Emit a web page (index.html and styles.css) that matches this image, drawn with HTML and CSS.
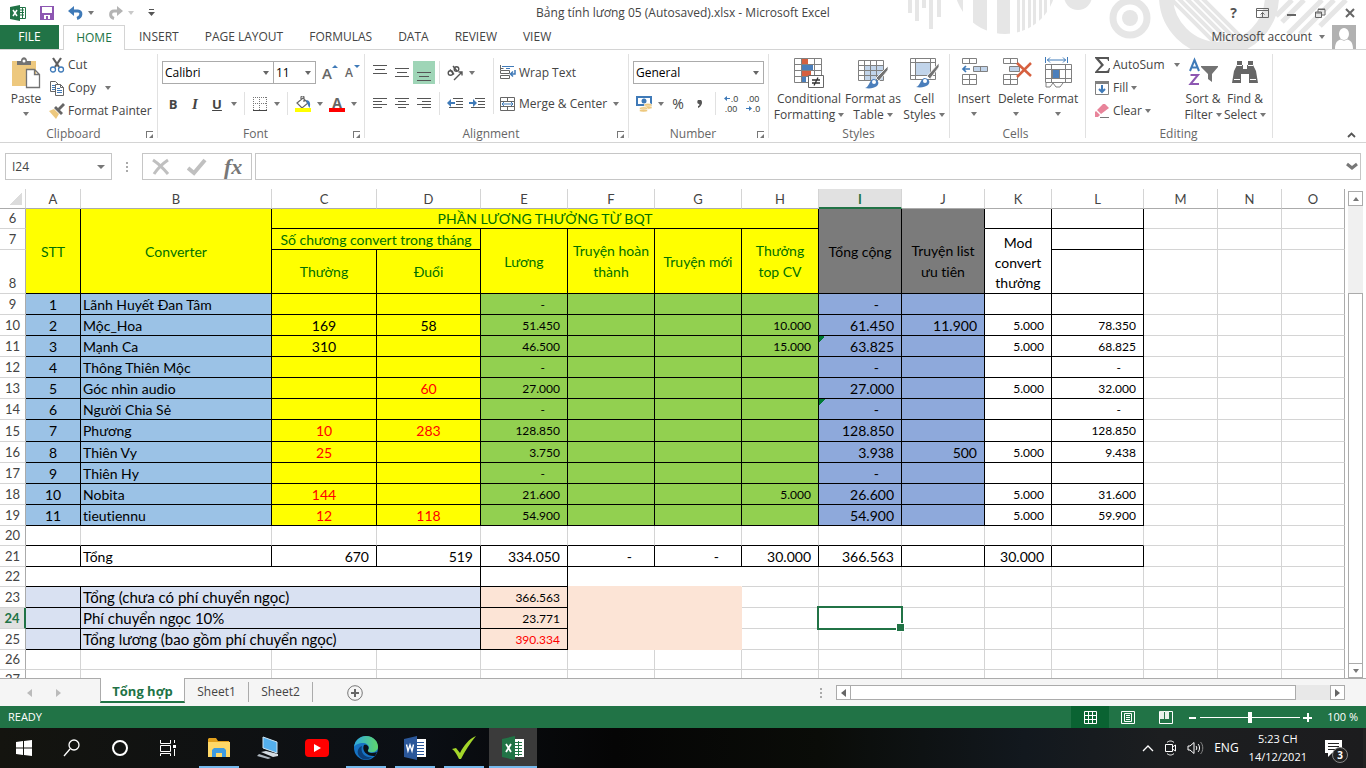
FILE: index.html
```html
<!DOCTYPE html>
<html lang="vi">
<head>
    <meta charset="utf-8">
    <title>Bảng tính lương 05 (Autosaved).xlsx - Microsoft Excel</title>
    <link rel="stylesheet" href="styles.css">
</head>
<body>
    <!-- Title bar -->
    <header class="title-bar">
        <svg class="title-art" width="466" height="49" viewBox="0 0 466 49" aria-hidden="true">
            <defs>
                <clipPath id="disc"><circle cx="105" cy="-17" r="51"/></clipPath>
                <clipPath id="ringInside"><circle cx="319" cy="-4" r="47"/></clipPath>
            </defs>
            <g fill="#e6e6e6">
                <path d="M8 0h4v13H8zM15 0h4v21h-4zM22 0h4v8h-4zM29 0h4v29h-4zM37 0h4v17h-4z"/>
                <g clip-path="url(#disc)">
                    <path d="M50 0h13v40H50zM73 0h14v40H73zM97 0h13v40H97zM117 0h3v40h-3zM122 0h3v40h-3zM128 0h3v40h-3zM133 0h3v40h-3zM139 0h3v40h-3zM144 0h3v40h-3zM150 0h3v40h-3z"/>
                </g>
                <circle cx="178" cy="-4" r="14"/>
                <circle cx="230" cy="18" r="8"/>
            </g>
            <g fill="none" stroke="#e6e6e6">
                <circle cx="230" cy="18" r="17" stroke-width="7"/>
                <circle cx="319" cy="-4" r="53" stroke-width="14"/>
                <g clip-path="url(#ringInside)" stroke-width="4">
                    <path d="M262-10l60 60M270-10l60 60M278-10l60 60M286-10l60 60M294-10l60 60"/>
                </g>
                <path stroke-width="5" d="M388 34l34-34M400 34l34-34M382 22l22-22M376 16l16-16M420 26l26-26"/>
            </g>
        </svg>
        <div class="quick-access">
            <svg width="16" height="16" viewBox="0 0 16 16"><path fill="#217346" d="M0 2l10-2v16L0 14z"/><path fill="#fff" stroke="#217346" d="M10 2.500h5.500v11H10"/><path stroke="#217346" d="M10 5h4M10 7.500h4M10 10h4M12.500 3v10"/><path stroke="#fff" stroke-width="1.500" d="M3 5l4 6M7 5l-4 6"/></svg>
            <button class="qa-btn" aria-label="Save"><svg width="14" height="14" viewBox="0 0 14 14"><path fill="#8d57b2" d="M0 0h14v14H0z"/><path fill="#fff" d="M2 1h10v6H2zM4 9h6v4H8v-3H6v3H4z"/></svg></button>
            <button class="qa-btn" aria-label="Undo"><svg width="16" height="14" viewBox="0 0 16 14"><path fill="none" stroke="#3f7ab8" stroke-width="3" d="M3 5h7c4 0 4 6-1 7.500"/><path fill="#3f7ab8" d="M0 5l6-5v10z"/></svg><i class="arrow"></i></button>
            <button class="qa-btn faded" aria-label="Redo"><svg width="16" height="14" viewBox="0 0 16 14"><path fill="none" stroke="#b4b4b4" stroke-width="3" d="M13 5H6c-4 0-5 6 0 7.500"/><path fill="#b4b4b4" d="M15 5L9 0v10z"/></svg><i class="arrow"></i></button>
            <button class="qa-btn" aria-label="Customize"><svg width="7" height="7" viewBox="0 0 7 7"><path fill="#555" d="M1 0h5v1H1zM0 3h7L3.500 7z"/></svg></button>
        </div>
        <h1>Bảng tính lương 05 (Autosaved).xlsx - Microsoft Excel</h1>
        <div class="window-buttons">
            <button aria-label="Help">?</button>
            <button aria-label="Ribbon display"><svg width="13" height="10" viewBox="0 0 13 10"><path fill="none" stroke="#666" d="M.5.5h12v9H.5zM.5 2.500h12M6.500 9V4.500M4.500 6.500l2-2 2 2"/></svg></button>
            <button aria-label="Minimize"><svg width="10" height="10" viewBox="0 0 10 10"><path fill="#666" d="M0 6h9v2H0z"/></svg></button>
            <button aria-label="Restore"><svg width="11" height="10" viewBox="0 0 11 10"><path fill="none" stroke="#666" d="M.5 4h6v5.500h-6zM.5 5h6M3 4V1.500h7V7H7M3 1h7"/></svg></button>
            <button aria-label="Close"><svg width="10" height="10" viewBox="0 0 10 10"><path stroke="#666" stroke-width="2" d="M1 1l8 8M9 1L1 9"/></svg></button>
        </div>
    </header>

    <nav class="tabs">
        <button class="tab tab-file">FILE</button>
        <button class="tab active">HOME</button>
        <button class="tab">INSERT</button>
        <button class="tab">PAGE LAYOUT</button>
        <button class="tab">FORMULAS</button>
        <button class="tab">DATA</button>
        <button class="tab">REVIEW</button>
        <button class="tab">VIEW</button>
        <button class="account">Microsoft account <i class="arrow"></i>
            <svg width="24" height="24" viewBox="0 0 24 24"><path fill="#b1b1b1" d="M0 0h24v24H0z"/><ellipse cx="12" cy="9" rx="5" ry="6" fill="#fff"/><path fill="#fff" d="M3 24c0-7 3-9 6-9.500 2 1.500 4 1.500 6 0 3 .5 6 2.500 6 9.500z"/></svg>
        </button>
    </nav>

    <!-- Ribbon -->
    <section class="ribbon">
        <div class="group g-clipboard">
            <div class="group-body">
                <button class="big">
                    <svg width="30" height="32" viewBox="0 0 30 32"><path fill="#edc87e" d="M1 4h24v25H1z"/><path fill="#737373" d="M6 8V4h4c0-5 6-5 6 0h4v4z"/><circle cx="13" cy="4" r="1.500" fill="#fff"/><path fill="#fff" stroke="#737373" stroke-width="1.300" d="M15.500 12.500h8l5 5v13h-13zM23.500 12.500v5h5"/></svg>
                    <span>Paste</span><i class="arrow"></i>
                </button>
                <div class="stack">
                    <button><svg width="16" height="16" viewBox="0 0 16 16"><path stroke="#5f5f5f" stroke-width="2.200" d="M4 1l6 9M12 1L6 10"/><circle cx="4" cy="12.500" r="2.500" fill="none" stroke="#3f7ab8" stroke-width="1.300"/><circle cx="12" cy="12.500" r="2.500" fill="none" stroke="#3f7ab8" stroke-width="1.300"/></svg>Cut</button>
                    <button><svg width="16" height="16" viewBox="0 0 16 16"><path fill="#fff" stroke="#666" d="M1.500 1.500h5l3 3v7h-8z"/><path stroke="#3f7ab8" d="M3 5.500h3M3 7.500h3M3 9.500h3"/><path fill="#fff" stroke="#666" d="M6.500 4.500h5l3 3v8h-8zM11.500 4.500v3h3"/><path stroke="#3f7ab8" d="M8 8.500h3M8 10.500h5M8 12.500h5"/></svg>Copy<i class="arrow far"></i></button>
                    <button><svg width="16" height="16" viewBox="0 0 16 16"><path fill="#edc87e" d="M0 8l5-2 5 5-3 5z"/><path fill="#666" d="M5 5l2-2 7 7-2 2zM9 5l5-5 2 2-5 5z"/></svg>Format Painter</button>
                </div>
            </div>
            <div class="group-label">Clipboard<i class="launch"></i></div>
        </div>

        <div class="group g-font">
            <div class="group-body rows">
                <div class="row">
                    <span class="combo font-name"><select aria-label="Font"><option>Calibri</option></select></span>
                    <span class="combo font-size"><select aria-label="Font size"><option>11</option></select></span>
                    <button class="ico" aria-label="Grow font"><b class="glyph">A</b><i class="tip up"></i></button>
                    <button class="ico" aria-label="Shrink font"><b class="glyph small">A</b><i class="tip"></i></button>
                </div>
                <div class="row">
                    <button class="ico"><b>B</b></button>
                    <button class="ico serif"><em>I</em></button>
                    <button class="ico"><b><u>U</u></b></button>
                    <i class="arrow wide"></i><i class="sep"></i>
                    <button class="ico" aria-label="Borders"><svg width="14" height="14" viewBox="0 0 14 14"><path fill="none" stroke="#777" stroke-dasharray="1 1" d="M.5 0v13M6.500 0v13M13.500 0v13M0 .5h14M0 6.500h14"/><path stroke="#444" d="M0 13.500h14"/></svg></button>
                    <i class="arrow wide"></i><i class="sep"></i>
                    <button class="ico" aria-label="Fill color"><svg width="16" height="16" viewBox="0 0 16 16"><path fill="#fff" stroke="#666" stroke-width="1.200" d="M2 7l6-5 5 5-6 5zM6 4V1.500a1.500 1.500 0 0 1 3 0V6"/><path fill="#3f7ab8" d="M11 4c4 0 5 4 3.500 8C13 10 13 8 12 7z"/><path fill="#ff0" d="M0 12h16v4H0z"/></svg></button>
                    <i class="arrow wide"></i>
                    <button class="ico" aria-label="Font color"><span class="font-color">A</span></button>
                    <i class="arrow wide"></i>
                </div>
            </div>
            <div class="group-label">Font<i class="launch"></i></div>
        </div>

        <div class="group g-align">
            <div class="group-body">
                <div class="rows">
                    <div class="row">
                        <button class="ico" aria-label="Top align"><svg width="14" height="16" viewBox="0 0 14 16"><path stroke="#555" d="M0 .5h14M2 4.500h10M0 8.500h14"/></svg></button>
                        <button class="ico" aria-label="Middle align"><svg width="14" height="16" viewBox="0 0 14 16"><path stroke="#555" d="M0 3.500h14M2 7.500h10M0 11.500h14"/></svg></button>
                        <button class="ico on" aria-label="Bottom align"><svg width="14" height="16" viewBox="0 0 14 16"><path stroke="#555" d="M0 7.500h14M2 11.500h10M0 15.500h14"/></svg></button>
                        <i class="sep"></i>
                        <button class="ico" aria-label="Orientation"><svg width="18" height="16" viewBox="0 0 18 16"><g fill="none" stroke="#555" stroke-width="1.400"><circle cx="4.500" cy="8" r="2.300"/><path d="M4 4.500l4 5M7 1l4 5"/><circle cx="10.500" cy="4" r="2.300"/><path d="M8 15l8-8M12.500 7H16v3.500"/></g></svg></button>
                        <i class="arrow wide"></i>
                    </div>
                    <div class="row">
                        <button class="ico" aria-label="Align left"><svg width="14" height="14" viewBox="0 0 14 14"><path stroke="#555" d="M0 1.500h14M0 4.500h9M0 7.500h14M0 10.500h9"/></svg></button>
                        <button class="ico" aria-label="Center"><svg width="14" height="14" viewBox="0 0 14 14"><path stroke="#555" d="M0 1.500h14M3 4.500h8M0 7.500h14M3 10.500h8"/></svg></button>
                        <button class="ico" aria-label="Align right"><svg width="14" height="14" viewBox="0 0 14 14"><path stroke="#555" d="M0 1.500h14M5 4.500h9M0 7.500h14M5 10.500h9"/></svg></button>
                        <i class="sep"></i>
                        <button class="ico" aria-label="Decrease indent"><svg width="16" height="14" viewBox="0 0 16 14"><path stroke="#555" d="M6 1.500h10M9 4.500h7M9 7.500h7M2 10.500h14"/><path fill="#3f7ab8" d="M0 6l4-4v3h4v2H4v3z"/></svg></button>
                        <button class="ico" aria-label="Increase indent"><svg width="16" height="14" viewBox="0 0 16 14"><path stroke="#555" d="M6 1.500h10M9 4.500h7M9 7.500h7M2 10.500h14"/><path fill="#3f7ab8" d="M8 6L4 2v3H0v2h4v3z"/></svg></button>
                    </div>
                </div>
                <i class="sep tall"></i>
                <div class="rows">
                    <button class="row"><svg width="16" height="16" viewBox="0 0 16 16"><path fill="#fff" stroke="#666" d="M.5 5.500h9v3h-9zM.5 10.500h9v3h-9zM.5 0v5M.5 3.500h3"/><path fill="none" stroke="#3f7ab8" d="M2 1.500h12M6 3.500h4"/><path fill="none" stroke="#3f7ab8" stroke-width="1.500" d="M15 5v4h-4M13 6.500L10.500 9l2.500 2.500"/></svg>Wrap Text</button>
                    <button class="row"><svg width="16" height="16" viewBox="0 0 16 16"><path fill="#fff" stroke="#666" d="M.5 1.500h14v13H.5zM.5 5.500h14M.5 10.500h14M7.500 1.500v4M7.500 10.500v4"/><path fill="none" stroke="#3f7ab8" d="M2 8h11M4 6L2 8l2 2M11 6l2 2-2 2"/></svg>Merge &amp; Center<i class="arrow far"></i></button>
                </div>
            </div>
            <div class="group-label">Alignment<i class="launch"></i></div>
        </div>

        <div class="group g-number">
            <div class="group-body rows">
                <div class="row"><span class="combo format"><select aria-label="Number format"><option>General</option></select></span></div>
                <div class="row">
                    <button class="ico" aria-label="Accounting format"><svg width="16" height="16" viewBox="0 0 16 16"><path fill="#fff" stroke="#3f7ab8" stroke-width="2" d="M1 1h14v8H1z"/><circle cx="8" cy="5" r="2.500" fill="#3f7ab8"/><g fill="#edc87e" stroke="#fff" stroke-width=".5"><ellipse cx="12" cy="9" rx="4" ry="1.700"/><ellipse cx="12" cy="11.500" rx="4" ry="1.700"/><ellipse cx="7.500" cy="12.500" rx="4" ry="1.700"/><ellipse cx="7.500" cy="14.500" rx="4" ry="1.500"/></g></svg></button>
                    <i class="arrow wide"></i>
                    <button class="ico pct">%</button>
                    <button class="ico" aria-label="Comma style"><svg width="6" height="8" viewBox="0 0 6 8"><path fill="#555" d="M1 0h3c2 2 1 6-3 8V6c1 0 2-1 1-2C0 4 0 1 1 0z"/></svg></button>
                    <i class="sep"></i>
                    <button class="ico dec" aria-label="Increase decimal"><span><svg width="6" height="5" viewBox="0 0 6 5"><path fill="#3f7ab8" d="M0 2.500L3 0v2h3v1H3v2z"/></svg>.0</span><span>.00</span></button>
                    <button class="ico dec" aria-label="Decrease decimal"><span>.00</span><span><svg width="6" height="5" viewBox="0 0 6 5"><path fill="#3f7ab8" d="M6 2.500L3 0v2H0v1h3v2z"/></svg>.0</span></button>
                </div>
            </div>
            <div class="group-label">Number<i class="launch"></i></div>
        </div>

        <div class="group g-styles">
            <div class="group-body">
                <button class="big w-lg"><svg width="32" height="32" viewBox="0 0 32 32"><path fill="#fff" stroke="#808080" d="M1.500 1.500h27v24h-27zM1.500 7.500h27M1.500 13.500h27M1.500 19.500h27M8.500 1.500v24M21.500 1.500v24"/><path fill="#d6603f" d="M9 2h6v5H9zM9 14h9v5H9z"/><path fill="#4a7ebb" d="M9 8h11v5H9zM9 20h4v5H9z"/><path fill="#fff" stroke="#666" d="M15.500 18.500h15v12h-15z"/><path stroke="#333" stroke-width="1.300" d="M19 23h8M19 26h8M25 20.500l-4 8"/></svg>
                    <span>Conditional<br>Formatting<i class="arrow"></i></span></button>
                <button class="big w-md"><svg width="32" height="32" viewBox="0 0 32 32"><path fill="#fff" d="M1 3h25v20H1z"/><path fill="#c1d4ea" d="M7 9h19v14H7z"/><path fill="none" stroke="#808080" d="M1.500 3.500h25v20h-25zM1.500 8.500h25M1.500 13.500h25M1.500 18.500h25M7.500 3.500v20M13.500 3.500v20M19.500 3.500v20"/><path fill="#737373" stroke="#fff" stroke-width=".8" d="M31 9v4l-9 11-3-3z"/><path fill="#4a7ebb" d="M8 31c4-1 4-7 8-9 5 0 7 4 4 7-3 2-7 3-12 2z"/><circle cx="17" cy="25" r="2" fill="#fff"/></svg>
                    <span>Format as<br>Table<i class="arrow"></i></span></button>
                <button class="big w-sm"><svg width="32" height="32" viewBox="0 0 32 32"><path fill="#fff" stroke="#808080" d="M2.500 1.500h25v21h-25zM2.500 5.500h25M2.500 18.500h25M7.500 1.500v21M22.500 1.500v21"/><path fill="#c1d4ea" d="M8 6h14v12H8z"/><path fill="#737373" stroke="#fff" stroke-width=".8" d="M31 6v4l-9 12-3-3z"/><path fill="#4a7ebb" d="M8 30c4-1 4-7 8-9 5 0 7 4 4 7-3 2-7 3-12 2z"/><circle cx="17" cy="24" r="2" fill="#fff"/></svg>
                    <span>Cell<br>Styles<i class="arrow"></i></span></button>
            </div>
            <div class="group-label">Styles</div>
        </div>

        <div class="group g-cells">
            <div class="group-body">
                <button class="big w-sm"><svg width="32" height="32" viewBox="0 0 32 32"><path fill="#fff" stroke="#808080" d="M4.500 1.500h14v5h-14zM11.500 1.500v5M4.500 17.500h14v10h-14zM4.500 22.500h14M11.500 17.500v10"/><path fill="#c1d4ea" stroke="#808080" d="M15.500 9.500h14v5h-14zM22.500 9.500v5"/><path fill="none" stroke="#3f7ab8" stroke-width="1.700" d="M5 12h7M8 9l-3 3 3 3"/></svg>
                    <span>Insert</span><i class="arrow"></i></button>
                <button class="big w-sm"><svg width="32" height="32" viewBox="0 0 32 32"><path fill="#fff" stroke="#808080" d="M3.500 1.500h14v5h-14zM10.500 1.500v5M3.500 17.500h14v10h-14zM3.500 22.500h14M10.500 17.500v10"/><path fill="#c1d4ea" stroke="#808080" d="M9.500 9.500h10v5h-10z"/><path stroke="#d6603f" stroke-width="2.500" d="M17 6l14 13M31 6L17 20"/></svg>
                    <span>Delete</span><i class="arrow"></i></button>
                <button class="big w-sm"><svg width="32" height="32" viewBox="0 0 32 32"><path fill="none" stroke="#3f7ab8" d="M3.500 0v6M25.500 0v6M5 3h19M8 .5L5.500 3 8 5.500M21 .5L23.500 3 21 5.500"/><path fill="#fff" stroke="#808080" d="M3.500 7.500h26v18h-26zM3.500 12.500h26M3.500 21.500h26M9.500 7.500v18M23.500 7.500v18M4 26v4h4l3-4 3 4h4l3-4"/><path fill="#4a7ebb" stroke="#808080" d="M10.500 12.500h7v9h-7z"/></svg>
                    <span>Format</span><i class="arrow"></i></button>
            </div>
            <div class="group-label">Cells</div>
        </div>

        <div class="group g-editing">
            <div class="group-body">
                <div class="stack">
                    <button><svg width="16" height="16" viewBox="0 0 16 16"><path fill="#555" d="M1 0h14v4h-1c0-2-1-2-3-2H5l5 6-6 6h8c2 0 2-1 3-3h1l-1 5H1v-1l6-7-6-7z"/></svg>AutoSum<i class="arrow far"></i></button>
                    <button><svg width="16" height="16" viewBox="0 0 16 16"><path fill="#fff" stroke="#808080" d="M1.500 1.500h13v13h-13z"/><path fill="#808080" d="M1 1h14v3H1z"/><path fill="none" stroke="#3f7ab8" stroke-width="2" d="M8 5v7M5 9l3 3 3-3"/></svg>Fill<i class="arrow"></i></button>
                    <button><svg width="16" height="16" viewBox="0 0 16 16"><path fill="#e8849a" d="M9 1h2l4 4-8 6-4-4zM2 8l4 4-2 2H1V9z"/><path stroke="#777" d="M6 14.500h9"/></svg>Clear<i class="arrow"></i></button>
                </div>
                <button class="big w-sm"><svg width="32" height="32" viewBox="0 0 32 32"><g fill="none" stroke-width="2"><path stroke="#3f7ab8" d="M3 14L7.500 3 12 14M4.500 10.500h6"/><path stroke="#8d57b2" d="M3.500 18H11L3.500 27H12"/></g><path fill="#737373" d="M14 9h17v1l-6 7v8l-4-3v-5l-7-7z"/></svg>
                    <span>Sort &amp;<br>Filter<i class="arrow"></i></span></button>
                <button class="big w-sm"><svg width="32" height="32" viewBox="0 0 32 32"><path fill="#666" d="M8 4h5v4h1v4h4V8h1V4h5v4l3 6 2 12h-9v-9h-8v9H3l2-12 3-6z"/><path stroke="#fff" d="M5 22.500h6M21 22.500h6M8 8.500h5M19 8.500h5"/></svg>
                    <span>Find &amp;<br>Select<i class="arrow"></i></span></button>
            </div>
            <div class="group-label">Editing</div>
        </div>
        <button class="collapse" aria-label="Collapse ribbon"><svg width="9" height="6" viewBox="0 0 9 6"><path fill="none" stroke="#555" stroke-width="1.800" d="M1 5l3.500-3.500L8 5"/></svg></button>
    </section>

    <!-- Formula bar -->
    <section class="formula-bar">
        <span class="name-box"><input type="text" value="I24" aria-label="Name box"><i class="arrow"></i></span>
        <i class="dots"></i>
        <div class="fx-buttons">
            <button aria-label="Cancel"><svg width="18" height="18" viewBox="0 0 18 18"><path fill="none" stroke="#c0c0c0" stroke-width="3" d="M1 2c6 4 10 8 15 14M16 2C10 6 6 10 2 16"/></svg></button>
            <button aria-label="Enter"><svg width="20" height="18" viewBox="0 0 20 18"><path fill="none" stroke="#c0c0c0" stroke-width="4" d="M1 10l6 5L18 2"/></svg></button>
            <button class="fx">fx</button>
        </div>
        <div class="formula"><input type="text" aria-label="Formula"><svg width="12" height="9" viewBox="0 0 12 9"><path fill="none" stroke="#777" stroke-width="3" d="M1 2l5 4 5-4"/></svg></div>
    </section>

    <!-- Worksheet -->
    <main class="sheet">
        <div class="grid-wrap">
            <table class="grid">
                <colgroup>
                    <col class="c-head"><col class="c-a"><col class="c-b"><col class="c-c"><col class="c-d"><col class="c-e"><col class="c-e"><col class="c-e"><col class="c-h"><col class="c-i"><col class="c-i"><col class="c-k"><col class="c-l"><col class="c-m"><col class="c-n"><col class="c-o">
                </colgroup>
                <thead>
                    <tr><th class="corner"></th><th>A</th><th>B</th><th>C</th><th>D</th><th>E</th><th>F</th><th>G</th><th>H</th><th class="sel">I</th><th>J</th><th>K</th><th>L</th><th>M</th><th>N</th><th>O</th></tr>
                </thead>
                <tbody>
                    <tr class="h20"><th>6</th><td class="k yellow" rowspan="3">STT</td><td class="k yellow" rowspan="3">Converter</td><td class="k yellow" colspan="6">PHẦN LƯƠNG THƯỞNG TỪ BQT</td><td class="k gray" rowspan="3">Tổng cộng</td><td class="k gray open"></td><td class="k"></td><td class="k"></td><td></td><td></td><td></td></tr>
                    <tr><th>7</th><td class="k yellow tight" colspan="2">Số chương convert trong tháng</td><td class="k yellow" rowspan="2">Lương</td><td class="k yellow" rowspan="2">Truyện hoàn thành</td><td class="k yellow" rowspan="2">Truyện mới</td><td class="k yellow" rowspan="2">Thưởng<br>top CV</td><td class="k gray" rowspan="2">Truyện list ưu tiên</td><td class="k mod" rowspan="2">Mod convert thưởng</td><td class="k"></td><td></td><td></td><td></td></tr>
                    <tr class="h44"><th>8</th><td class="k yellow">Thường</td><td class="k yellow">Đuổi</td><td class="k"></td><td></td><td></td><td></td></tr>
                    <tr class="data"><th>9</th><td>1</td><td>Lãnh Huyết Đan Tâm</td><td></td><td></td><td class="nil">-</td><td></td><td></td><td></td><td class="nil">-</td><td></td><td></td><td></td><td></td><td></td><td></td></tr>
                    <tr class="data"><th>10</th><td>2</td><td>Mộc_Hoa</td><td>169</td><td>58</td><td>51.450</td><td></td><td></td><td>10.000</td><td>61.450</td><td>11.900</td><td>5.000</td><td>78.350</td><td></td><td></td><td></td></tr>
                    <tr class="data"><th>11</th><td>3</td><td>Mạnh Ca</td><td>310</td><td></td><td>46.500</td><td></td><td></td><td>15.000</td><td class="flag">63.825</td><td></td><td>5.000</td><td>68.825</td><td></td><td></td><td></td></tr>
                    <tr class="data"><th>12</th><td>4</td><td>Thông Thiên Mộc</td><td></td><td></td><td class="nil">-</td><td></td><td></td><td></td><td class="nil">-</td><td></td><td></td><td class="nil">-</td><td></td><td></td><td></td></tr>
                    <tr class="data"><th>13</th><td>5</td><td>Góc nhìn audio</td><td></td><td class="red">60</td><td>27.000</td><td></td><td></td><td></td><td>27.000</td><td></td><td>5.000</td><td>32.000</td><td></td><td></td><td></td></tr>
                    <tr class="data"><th>14</th><td>6</td><td>Người Chia Sẻ</td><td></td><td></td><td class="nil">-</td><td></td><td></td><td></td><td class="nil flag">-</td><td></td><td></td><td class="nil">-</td><td></td><td></td><td></td></tr>
                    <tr class="data h22"><th>15</th><td>7</td><td>Phương</td><td class="red">10</td><td class="red">283</td><td>128.850</td><td></td><td></td><td></td><td>128.850</td><td></td><td></td><td>128.850</td><td></td><td></td><td></td></tr>
                    <tr class="data"><th>16</th><td>8</td><td>Thiên Vy</td><td class="red">25</td><td></td><td>3.750</td><td></td><td></td><td></td><td>3.938</td><td>500</td><td>5.000</td><td>9.438</td><td></td><td></td><td></td></tr>
                    <tr class="data"><th>17</th><td>9</td><td>Thiên Hy</td><td></td><td></td><td class="nil">-</td><td></td><td></td><td></td><td class="nil">-</td><td></td><td></td><td></td><td></td><td></td><td></td></tr>
                    <tr class="data"><th>18</th><td>10</td><td>Nobita</td><td class="red">144</td><td></td><td>21.600</td><td></td><td></td><td>5.000</td><td>26.600</td><td></td><td>5.000</td><td>31.600</td><td></td><td></td><td></td></tr>
                    <tr class="data"><th>19</th><td>11</td><td>tieutiennu</td><td class="red">12</td><td class="red">118</td><td>54.900</td><td></td><td></td><td></td><td>54.900</td><td></td><td>5.000</td><td>59.900</td><td></td><td></td><td></td></tr>
                    <tr class="h20 spacer"><th>20</th><td></td><td></td><td></td><td></td><td></td><td></td><td></td><td></td><td></td><td></td><td></td><td></td><td></td><td></td><td></td></tr>
                    <tr class="total"><th>21</th><td></td><td class="left">Tổng</td><td>670</td><td>519</td><td>334.050</td><td class="nil">-</td><td class="nil">-</td><td>30.000</td><td>366.563</td><td></td><td>30.000</td><td></td><td></td><td></td><td></td></tr>
                    <tr class="h20"><th>22</th><td class="k" colspan="4"></td><td class="k"></td><td class="under-peach" colspan="2"></td><td></td><td></td><td></td><td></td><td></td><td></td><td></td><td></td></tr>
                    <tr class="sum"><th>23</th><td class="k pale"></td><td class="k pale left" colspan="3">Tổng (chưa có phí chuyển ngọc)</td><td class="k peach num">366.563</td><td class="peach-block" colspan="2" rowspan="3"></td><td></td><td></td><td></td><td></td><td></td><td></td><td></td><td></td></tr>
                    <tr class="sum"><th class="sel">24</th><td class="k pale"></td><td class="k pale left" colspan="3">Phí chuyển ngọc 10%</td><td class="k peach num">23.771</td><td></td><td class="cursor"></td><td></td><td></td><td></td><td></td><td></td><td></td></tr>
                    <tr class="sum"><th>25</th><td class="k pale"></td><td class="k pale left" colspan="3">Tổng lương (bao gồm phí chuyển ngọc)</td><td class="k peach num red">390.334</td><td></td><td></td><td></td><td></td><td></td><td></td><td></td><td></td></tr>
                    <tr class="h20"><th>26</th><td></td><td></td><td></td><td></td><td></td><td></td><td></td><td></td><td></td><td></td><td></td><td></td><td></td><td></td><td></td></tr>
                    <tr class="h20"><th>27</th><td></td><td></td><td></td><td></td><td></td><td></td><td></td><td></td><td></td><td></td><td></td><td></td><td></td><td></td><td></td></tr>
                </tbody>
            </table>
        </div>
        <div class="vscroll">
            <button aria-label="Scroll up"><i class="arrow up"></i></button>
            <div class="vtrack"><div class="vthumb"></div></div>
            <button aria-label="Scroll down"><i class="arrow"></i></button>
        </div>
    </main>

    <!-- Sheet tabs -->
    <div class="sheet-tabs">
        <div class="tab-nav"><button aria-label="Previous sheet"><i class="arrow lt"></i></button><button aria-label="Next sheet"><i class="arrow rt"></i></button></div>
        <button class="sheet-tab active">Tổng hợp</button>
        <button class="sheet-tab">Sheet1</button>
        <button class="sheet-tab">Sheet2</button>
        <button class="add-sheet" aria-label="New sheet"><svg width="16" height="16" viewBox="0 0 16 16"><circle cx="8" cy="8" r="7.300" fill="none" stroke="#777"/><path stroke="#666" stroke-width="2" d="M8 4v8M4 8h8"/></svg></button>
        <div class="hscroll">
            <i class="dots"></i>
            <button aria-label="Scroll left"><i class="arrow lt"></i></button>
            <div class="htrack"><div class="hthumb"></div></div>
            <button aria-label="Scroll right"><i class="arrow rt"></i></button>
        </div>
    </div>

    <footer class="status-bar">
        <span class="ready">READY</span>
        <button class="view on" aria-label="Normal"><svg width="13" height="13" viewBox="0 0 13 13"><path fill="none" stroke="#fff" d="M.5.5h12v12H.5zM4.500 0v13M8.500 0v13M0 4.500h13M0 8.500h13"/></svg></button>
        <button class="view" aria-label="Page layout"><svg width="14" height="13" viewBox="0 0 14 13"><path fill="none" stroke="#fff" d="M.5.5h13v12H.5zM3.500 2.500h7v8h-7zM5 4.500h4M5 6.500h4M5 8.500h4"/></svg></button>
        <button class="view" aria-label="Page break preview"><svg width="14" height="13" viewBox="0 0 14 13"><path fill="none" stroke="#fff" d="M.5.5h13v12H.5z"/><path fill="#e6f0ea" d="M1 0h4v8H1zM6 0h4v8H6z"/></svg></button>
        <div class="zoom">
            <button aria-label="Zoom out"><svg width="9" height="9" viewBox="0 0 9 9"><path fill="#fff" d="M1 4h7v2H1z"/></svg></button>
            <input type="range" min="0" max="200" value="100" aria-label="Zoom">
            <button aria-label="Zoom in"><svg width="9" height="9" viewBox="0 0 9 9"><path fill="#fff" d="M0 4h4V0h2v4h3v2H6v3H4V6H0z"/></svg></button>
        </div>
        <span class="zoom-value">100 %</span>
    </footer>

    <!-- Windows taskbar -->
    <div class="taskbar">
        <button class="task" aria-label="Start"><svg width="16" height="16" viewBox="0 0 16 16"><path fill="#fff" d="M0 2l7-1v6.500H0zM8 1l8-1v7.500H8zM0 8.500h7V15l-7-1zM8 8.500h8V16l-8-1z"/></svg></button>
        <button class="task" aria-label="Search"><svg width="18" height="18" viewBox="0 0 18 18"><circle cx="11" cy="6" r="5" fill="none" stroke="#fff" stroke-width="1.300"/><path stroke="#fff" stroke-width="1.300" d="M7 10l-6 7"/></svg></button>
        <button class="task" aria-label="Cortana"><svg width="18" height="18" viewBox="0 0 18 18"><circle cx="9" cy="9" r="7" fill="none" stroke="#fff" stroke-width="2"/></svg></button>
        <button class="task" aria-label="Task view"><svg width="17" height="16" viewBox="0 0 17 16"><path fill="none" stroke="#fff" d="M.5 0v3.500h10V0M.5 5.500h10v6H.5zM.5 16v-2.500h10V16M14.500 0v3M14.500 9v7"/><path fill="#fff" d="M13 5h3v3h-3z"/></svg></button>
        <div class="task-apps">
            <button class="task run" aria-label="File Explorer"><svg width="24" height="22" viewBox="0 0 24 22"><path fill="#e2a01d" d="M1 2l1-1h7l2 3h11v4H1z"/><path fill="#ffd867" d="M1 5h22v15H1z"/><path fill="#3e9be0" d="M5 20v-7l2-2h10l2 2v7h-4v-4H9v4z"/></svg></button>
            <button class="task" aria-label="Remote desktop"><svg width="24" height="24" viewBox="0 0 24 24"><path fill="#54b0ee" stroke="#cfe6f5" d="M7 1l14 5v11L7 12z"/><path fill="#d5dce2" d="M10 15l12 3v2l-5 1-12-5z"/><path fill="#aeb8c0" d="M3 18l12 4-3 1-11-3z"/></svg></button>
            <button class="task" aria-label="YouTube"><svg width="24" height="18" viewBox="0 0 24 18"><rect width="24" height="18" rx="4" fill="#f00"/><path fill="#fff" d="M9 5l7 4-7 4z"/></svg></button>
            <button class="task run" aria-label="Edge"><svg width="26" height="26" viewBox="0 0 26 26"><defs><linearGradient id="edgeTop" x1="0" x2="1"><stop offset="0" stop-color="#2fa9e0"/><stop offset="1" stop-color="#5fd66a"/></linearGradient></defs><circle cx="13" cy="13" r="12" fill="#1673c4"/><path fill="url(#edgeTop)" d="M1 12C2 5 7 1 13 1c8 0 12 6 12 11 0 4-4 6-9 5-2-1-1-2 0-4 0-3-3-5-6-5-4 0-8 2-9 4z"/><path fill="#0c3f78" d="M9 11c-2 7 3 12 10 11-4 4-12 3-14-3-1-4 1-7 4-8z"/><path fill="#0b1118" d="M11 10c3-1 6 2 4 5-1 3 4 4 9 2l-2 4c-7 1-14-5-11-11z"/></svg></button>
            <button class="task run" aria-label="Word"><svg width="24" height="24" viewBox="0 0 24 24"><path fill="#fff" d="M12 3h11v18H12z"/><path stroke="#2b579a" d="M14 6.500h7M14 9.500h7M14 12.500h7M14 15.500h7M14 18.500h7"/><path fill="#2b579a" d="M1 3l13-3v24L1 21z"/><path fill="none" stroke="#fff" stroke-width="1.400" d="M3.500 8.500L5 15l2-6 2 6 1.500-6.500"/></svg></button>
            <button class="task run" aria-label="Task done"><svg width="26" height="24" viewBox="0 0 26 24"><path fill="#a4d62a" d="M1 13l4-1 4 5C13 9 18 3 25 0 19 7 14 15 10 23H8c-2-4-4-8-7-10z"/></svg></button>
            <button class="task run current" aria-label="Excel"><svg width="24" height="24" viewBox="0 0 24 24"><path fill="#fff" d="M12 3h11v18H12z"/><path fill="none" stroke="#217346" d="M14 6.500h7M14 9.500h7M14 12.500h7M14 15.500h7M14 18.500h7M17.500 5v15"/><path fill="#217346" d="M1 3l13-3v24L1 21z"/><path stroke="#fff" stroke-width="1.800" d="M5 8l5 8M10 8l-5 8"/></svg></button>
        </div>
        <div class="tray">
            <svg width="12" height="8" viewBox="0 0 12 8"><path fill="none" stroke="#fff" stroke-width="1.300" d="M1 7l5-5 5 5"/></svg>
            <svg width="13" height="16" viewBox="0 0 13 16"><path fill="none" stroke="#fff" d="M1.500 4.500h7v7h-7zM8.500 7l3-2v6l-3-2M3 2.500c2-2 5-2 7 0M3 13.500c2 2 5 2 7 0"/></svg>
            <svg width="17" height="14" viewBox="0 0 17 14"><path fill="none" stroke="#fff" d="M1 5h2l4-3.500v11L3 9H1zM9 5c1 1 1 3 0 4M11 3c2 2 2 6 0 8"/><path fill="none" stroke="#888" d="M13.500 1c3 3 3 9 0 12"/></svg>
            <span>ENG</span>
            <div class="clock">5:23 CH<br>14/12/2021</div>
            <div class="notify"><svg width="17" height="17" viewBox="0 0 17 17"><path fill="#fff" d="M0 0h17v13H7l-4 4v-4H0z"/><path stroke="#222" d="M3 3.500h11M3 6.500h11M3 9.500h7"/></svg><b>3</b></div>
        </div>
    </div>
</body>
</html>
```
FILE: styles.css
```css
* {
    box-sizing: border-box;
}

body {
    margin: 0;
    height: 100vh;
    display: flex;
    flex-direction: column;
    overflow: hidden;
    background: #fff;
    color: #444;
    font: 12px/16px "Open Sans", "Noto Sans", sans-serif;
}

button,
input,
select {
    margin: 0;
    padding: 0;
    border: none;
    background: none;
    color: inherit;
    font: inherit;
    white-space: nowrap;
}

svg {
    display: block;
    flex: none;
}

.arrow {
    display: inline-block;
    flex: none;
    border: 3px solid transparent;
    border-top: 4px solid #777;
    border-bottom: none;
}

.arrow.up {
    border-top: none;
    border-bottom: 4px solid #777;
}

.arrow.lt {
    border: 4px solid transparent;
    border-right: 5px solid #666;
    border-left: none;
}

.arrow.rt {
    border: 4px solid transparent;
    border-left: 5px solid #666;
    border-right: none;
}

.arrow.wide {
    margin: 0 3px;
}

.arrow.far {
    margin-left: 6px;
}

/* title bar */
.title-bar {
    position: relative;
    display: flex;
    align-items: center;
    flex: none;
    height: 25px;
}

.title-art {
    position: absolute;
    top: 0;
    right: 0;
    z-index: -1;
}

.title-bar h1 {
    margin: 0;
    flex: 1;
    text-align: center;
    font-size: 12px;
    font-weight: normal;
}

.quick-access {
    display: flex;
    align-items: center;
    width: 200px;
    padding-left: 10px;
    gap: 14px;
}

.qa-btn {
    display: flex;
    align-items: center;
    gap: 4px;
}

.faded .arrow {
    opacity: .4;
}

.window-buttons {
    display: flex;
    align-items: center;
    width: 200px;
    justify-content: flex-end;
    padding-right: 2px;
}

.window-buttons button {
    display: flex;
    justify-content: center;
    width: 29px;
    height: 20px;
    align-items: center;
    color: #555;
    font-size: 14px;
    font-weight: bold;
}

/* tabs */
.tabs {
    display: flex;
    flex: none;
    height: 25px;
    border-bottom: 1px solid #d4d4d4;
}

.tab {
    padding: 0 13px;
}

.tab-file {
    width: 59px;
    margin-right: 4px;
    background: #217346;
    color: #fff;
}

.tab.active {
    width: 62px;
    height: 25px;
    margin-right: 1px;
    padding: 0;
    border: 1px solid #d4d4d4;
    border-bottom: none;
    background: #fff;
    color: #217346;
}

.account {
    display: flex;
    align-items: center;
    gap: 7px;
    margin-left: auto;
    padding-right: 10px;
}

/* ribbon */
.ribbon {
    display: flex;
    flex: none;
    height: 93px;
    border-bottom: 1px solid #d4d4d4;
}

.group {
    position: relative;
    display: flex;
    flex-direction: column;
    flex: none;
    height: 92px;
    padding-top: 3px;
}

.group::after {
    content: "";
    position: absolute;
    top: 4px;
    right: 0;
    width: 1px;
    height: 84px;
    background: #e1e1e1;
}

.g-clipboard { width: 158px; padding-left: 5px; }
.g-font { width: 207px; padding-left: 4px; }
.g-align { width: 264px; padding-left: 4px; }
.g-number { width: 140px; padding-left: 4px; }
.g-styles { width: 181px; padding-left: 6px; }
.g-cells { width: 136px; padding-left: 3px; }
.g-editing { width: 187px; padding-left: 6px; }

.group-body {
    display: flex;
    flex: 1;
}

.group-label {
    position: relative;
    height: 16px;
    margin-left: -16px;
    text-align: center;
    color: #666;
}

.g-styles .group-label,
.g-cells .group-label,
.g-editing .group-label {
    margin-left: -8px;
}

.launch {
    position: absolute;
    right: 5px;
    top: 5px;
    width: 7px;
    height: 7px;
    border: 1px solid #777;
    border-right: none;
    border-bottom: none;
}

.launch::after {
    content: "";
    position: absolute;
    right: 0;
    bottom: 0;
    border: 2px solid #777;
    border-top-color: transparent;
    border-left-color: transparent;
}

.big {
    display: flex;
    flex-direction: column;
    align-items: center;
    width: 42px;
    padding-top: 4px;
}

.big svg {
    margin-bottom: 2px;
}

.big .arrow {
    margin-top: 5px;
}

.big span .arrow {
    margin: 0 0 2px 3px;
}

.w-lg { width: 68px; }
.w-md { width: 60px; }
.w-sm { width: 42px; }

.stack {
    display: flex;
    flex-direction: column;
    width: 106px;
}

.g-editing .stack {
    width: 90px;
}

.stack button {
    display: flex;
    align-items: center;
    gap: 3px;
    height: 23px;
    padding-left: 2px;
}

.rows {
    display: flex;
    flex-direction: column;
    gap: 8px;
    padding-top: 8px;
}

.row {
    display: flex;
    align-items: center;
    height: 23px;
}

.row > svg {
    margin-right: 3px;
}

.ico {
    position: relative;
    display: flex;
    align-items: center;
    justify-content: center;
    width: 22px;
    height: 23px;
    font-size: 13px;
}

.ico.on {
    background: #9fd5b7;
}

.serif {
    font-family: "Liberation Serif", serif;
    font-weight: bold;
    font-size: 15px;
}

.glyph {
    font-size: 15px;
    font-weight: 600;
    color: #666;
}

.glyph.small {
    font-size: 12px;
}

.tip {
    position: absolute;
    top: 4px;
    right: 0;
    border: 3px solid transparent;
    border-top-color: #3f7ab8;
    border-bottom: none;
}

.tip.up {
    border-top: none;
    border-bottom: 3px solid #3f7ab8;
}

.font-color {
    width: 16px;
    height: 16px;
    border-bottom: 4px solid #f00;
    line-height: 13px;
    font-size: 14px;
    font-weight: bold;
    color: #666;
}

.pct {
    font-size: 14px;
}

.dec {
    flex-direction: column;
    font: 9px/10px "Liberation Sans", sans-serif;
}

.dec span {
    display: flex;
    align-items: center;
    gap: 1px;
}

.sep {
    flex: none;
    width: 1px;
    height: 23px;
    margin: 0 4px;
    background: #e1e1e1;
}

.sep.tall {
    height: 56px;
    margin: 5px 6px 0 5px;
}

.combo {
    position: relative;
    height: 23px;
    border: 1px solid #ababab;
    background: #fff;
    color: #000;
}

.combo::after {
    content: "";
    position: absolute;
    right: 4px;
    top: 9px;
    border: 3px solid transparent;
    border-top: 4px solid #666;
    border-bottom: none;
    pointer-events: none;
}

.combo select {
    width: 100%;
    height: 21px;
    padding-left: 2px;
    appearance: none;
}

.font-name { width: 112px; }
.font-size { width: 43px; margin-left: -1px; }
.format { width: 131px; }

.collapse {
    align-self: flex-end;
    margin: 0 10px 4px auto;
}

/* formula bar */
.formula-bar {
    display: flex;
    flex: none;
    height: 46px;
    padding: 10px 5px 9px;
}

.name-box {
    display: flex;
    align-items: center;
    width: 107px;
    padding: 0 6px;
    border: 1px solid #c6c6c6;
}

.name-box input {
    flex: 1;
    min-width: 0;
}

.name-box .arrow {
    border-width: 4px 4px 0;
}

.dots {
    align-self: center;
    width: 2px;
    height: 10px;
    margin: 0 14px;
    background: repeating-linear-gradient(#aaa 0 2px, transparent 2px 4px);
}

.fx-buttons {
    display: flex;
    align-items: center;
    justify-content: space-around;
    width: 110px;
    margin-right: 3px;
    border: 1px solid #c6c6c6;
}

.fx {
    font: italic bold 22px/20px "Liberation Serif", serif;
    color: #777;
}

.formula {
    display: flex;
    flex: 1;
    align-items: center;
    padding-right: 2px;
    border: 1px solid #c6c6c6;
}

.formula input {
    flex: 1;
}

/* worksheet */
.sheet {
    display: flex;
    flex: 1;
    min-height: 0;
}

.grid-wrap {
    flex: 1;
    overflow: hidden;
}

.grid {
    width: 1345px;
    table-layout: fixed;
    border-spacing: 0;
    color: #000;
    font: 14px/20px Lato, "Noto Sans", sans-serif;
    font-variant-ligatures: none;
}

.c-head { width: 26px; }
.c-a { width: 55px; }
.c-b { width: 191px; }
.c-c { width: 105px; }
.c-d { width: 104px; }
.c-e { width: 87px; }
.c-h { width: 77px; }
.c-i { width: 83px; }
.c-k { width: 67px; }
.c-l { width: 92px; }
.c-m { width: 74px; }
.c-n { width: 64px; }
.c-o { width: 63px; }

.grid tr {
    height: 21px;
}

.grid .h20 { height: 20px; }
.grid .h22 { height: 22px; }
.grid .h44 { height: 44px; }

.grid th,
.grid td {
    padding: 0;
    border-right: 1px solid #d4d4d4;
    border-bottom: 1px solid #d4d4d4;
    text-align: center;
    line-height: 19px;
}

.grid th {
    color: #444;
    font-size: 13px;
    font-weight: normal;
}

.grid thead tr {
    height: 20px;
}

.grid thead th {
    padding-top: 2px;
    border-bottom-color: #ababab;
    line-height: 17px;
}

.grid thead th.sel {
    border-bottom: 2px solid #217346;
    background: #e1e1e1;
    color: #217346;
    font-weight: bold;
    line-height: 16px;
}

.grid .corner {
    background: linear-gradient(135deg, transparent 50%, #dcdcdc 50%) 10px 4px / 12px 12px no-repeat;
}

.grid tbody th {
    border-right-color: #ababab;
    vertical-align: bottom;
}

.grid tbody th.sel {
    border-right: 2px solid #217346;
    background: #e1e1e1;
    color: #217346;
    font-weight: bold;
}

.grid td:last-child,
.grid thead th:last-child {
    border-right-color: #ababab;
}

.grid .k,
.total td:nth-child(-n+13),
.data td:nth-child(-n+13) {
    border-color: #000;
}

.spacer td:nth-child(-n+13) {
    border-bottom-color: #000;
}

.grid .yellow {
    background: #ff0;
    color: #007000;
    line-height: 21px;
}

.grid .h20 .yellow[colspan],
.grid .tight {
    line-height: 19px;
}

.grid .gray {
    background: #7b7b7b;
    line-height: 21px;
}

.grid .gray.open {
    border-bottom-color: #7b7b7b;
}

.grid .mod {
    vertical-align: bottom;
    line-height: 20px;
}

.data td:nth-child(2),
.data td:nth-child(3) {
    background: #9bc2e6;
}

.grid .data td:nth-child(3),
.grid .left {
    padding-left: 2px;
    text-align: left;
}

.sum .left {
    font-size: 15px;
}

.data td:nth-child(4),
.data td:nth-child(5) {
    background: #ff0;
}

.grid .data td:nth-child(n+6),
.grid .num {
    padding-right: 7px;
    text-align: right;
    font-size: 12px;
}

.data td:nth-child(n+6):nth-child(-n+9) {
    background: #92d050;
}

.data td:nth-child(10),
.data td:nth-child(11) {
    background: #8ea9db;
}

.grid .data td:nth-child(10),
.grid .data td:nth-child(11) {
    font-size: 14px;
}

.grid .total td:nth-child(n+4) {
    padding-right: 7px;
    text-align: right;
}

.grid tr td.nil:nth-child(n) {
    padding-right: 22px;
}

.red,
.grid .red {
    color: #f00;
}

.grid .data .flag {
    background: linear-gradient(135deg, #007a33 50%, #8ea9db 50%) 0 0 / 6px 6px no-repeat #8ea9db;
}

.grid .pale {
    background: #d9e1f2;
}

.grid .peach,
.grid .peach-block {
    background: #fce4d6;
}

.grid .peach-block,
.grid .under-peach {
    border-color: #fce4d6;
}

.grid .under-peach {
    border-right-color: #fff;
}

/* active cell outline */
.cursor {
    position: relative;
}

.cursor::before {
    content: "";
    position: absolute;
    inset: -2px;
    border: 2px solid #217346;
}

.cursor::after {
    content: "";
    position: absolute;
    right: -4px;
    bottom: -4px;
    width: 7px;
    height: 7px;
    border: 1px solid #fff;
    background: #217346;
}

.vscroll {
    display: flex;
    flex-direction: column;
    width: 15px;
    margin: 2px 3px 0;
}

.vscroll button,
.hscroll button {
    display: flex;
    align-items: center;
    justify-content: center;
    flex: none;
    width: 15px;
    height: 15px;
    border: 1px solid #ababab;
    background: #fff;
}

.vtrack {
    display: flex;
    align-items: flex-end;
    flex: 1;
    background: #f0f0f0;
}

.vthumb {
    width: 15px;
    height: 81%;
    border: 1px solid #ababab;
    border-bottom: none;
    background: #fff;
}

/* sheet tabs */
.sheet-tabs {
    display: flex;
    flex: none;
    height: 28px;
    border-top: 1px solid #ababab;
    background: #f5f5f5;
}

.tab-nav {
    display: flex;
    align-items: center;
    justify-content: center;
    gap: 24px;
    width: 88px;
    margin-right: 12px;
    opacity: .4;
}

.sheet-tab {
    width: 64px;
    height: 20px;
    margin-top: 3px;
    border-right: 1px solid #ababab;
}

.sheet-tab.active {
    width: 85px;
    height: 25px;
    margin-top: -1px;
    padding-top: 2px;
    border-left: 1px solid #ababab;
    border-bottom: 2px solid #217346;
    background: #fff;
    color: #217346;
    font-size: 13px;
    font-weight: bold;
}

.add-sheet {
    margin-left: 34px;
}

.hscroll {
    display: flex;
    align-items: center;
    flex: 0 0 41%;
    margin-left: auto;
    padding-right: 21px;
}

.htrack {
    flex: 1;
    height: 15px;
    background: #e8e8e8;
}

.hthumb {
    width: 93%;
    height: 15px;
    border: 1px solid #ababab;
    border-left: none;
    background: #fff;
}

/* status bar */
.status-bar {
    display: flex;
    align-items: center;
    flex: none;
    height: 22px;
    background: #217346;
    color: #fff;
    font-size: 11px;
}

.ready {
    flex: 1;
    padding-left: 8px;
}

.view {
    display: flex;
    align-items: center;
    justify-content: center;
    width: 38px;
    height: 22px;
}

.view.on {
    background: #0a6332;
}

.zoom {
    display: flex;
    align-items: center;
    gap: 3px;
    margin-left: 3px;
}

.zoom input {
    width: 100px;
    height: 12px;
    appearance: none;
    background: linear-gradient(#fff, #fff) center / 100% 1px no-repeat;
}

.zoom input::-webkit-slider-thumb {
    appearance: none;
    width: 4px;
    height: 11px;
    background: #fff;
}

.zoom-value {
    width: 54px;
    padding-right: 8px;
    text-align: right;
}

/* taskbar */
.taskbar {
    display: flex;
    flex: none;
    height: 40px;
    background: linear-gradient(90deg, #14140f, #0b0f15 30%, #050505 45%, #0a0c08 60%, #12181e 75%, #1c1e20 85%, #1c1c1e);
    color: #fff;
}

.task {
    position: relative;
    display: flex;
    align-items: center;
    justify-content: center;
    width: 48px;
    height: 40px;
}

.task-apps {
    display: flex;
    gap: 1px;
    padding-left: 3px;
}

.run::after {
    content: "";
    position: absolute;
    left: 4px;
    right: 4px;
    bottom: 0;
    height: 2px;
    background: #76b9ed;
}

.run.current {
    background: #3b3b3b;
}

.run.current::after {
    left: 0;
    right: 0;
}

.tray {
    display: flex;
    align-items: center;
    gap: 10px;
    margin-left: auto;
    padding-right: 21px;
    border-right: 3px solid #222;
}

.clock {
    font-size: 11px;
    line-height: 18px;
    text-align: center;
}

.notify {
    position: relative;
    margin-left: 8px;
}

.notify b {
    position: absolute;
    left: 7px;
    top: 7px;
    width: 16px;
    height: 16px;
    border: 1px solid #888;
    border-radius: 50%;
    background: #222;
    font-size: 10px;
    line-height: 14px;
    text-align: center;
}
```
